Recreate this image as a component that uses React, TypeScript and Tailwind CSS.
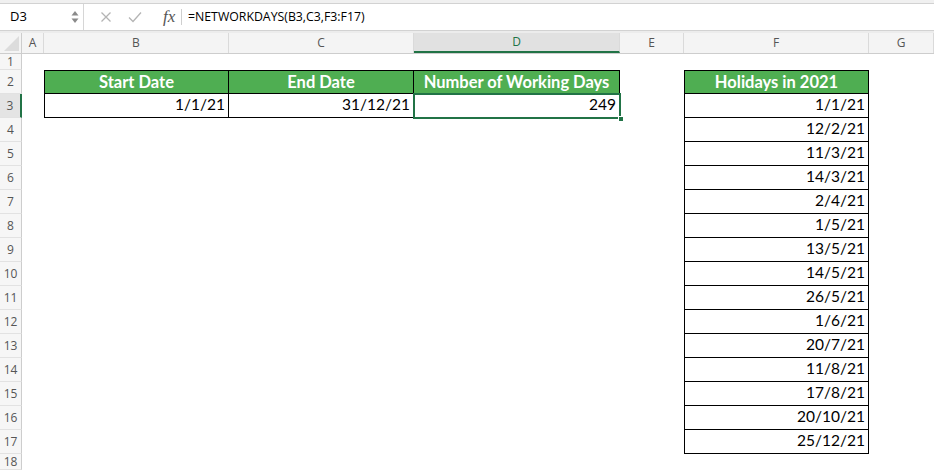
import React from 'react';

const cols = [
  { key: 'A', w: 'w-[22px]' },
  { key: 'B', w: 'w-[185px]' },
  { key: 'C', w: 'w-[185px]' },
  { key: 'D', w: 'w-[206px]' },
  { key: 'E', w: 'w-[64px]' },
  { key: 'F', w: 'w-[185px]' },
  { key: 'G', w: 'flex-1' },
];

const holidays = [
  '1/1/21',
  '12/2/21',
  '11/3/21',
  '14/3/21',
  '2/4/21',
  '1/5/21',
  '13/5/21',
  '14/5/21',
  '26/5/21',
  '1/6/21',
  '20/7/21',
  '11/8/21',
  '17/8/21',
  '20/10/21',
  '25/12/21',
];

const cellFont = { fontFamily: 'Lato, "Open Sans", sans-serif' };
const uiFont = { fontFamily: '"Open Sans", "Noto Sans", sans-serif' };

function HeaderCell({ children, left }: { children: React.ReactNode; left?: boolean }) {
  return (
    <div
      className={`h-full flex items-center justify-center bg-[#4fae52] text-white font-bold text-[16.5px] border-t border-r border-b border-black ${left ? 'border-l' : ''}`}
    >
      {children}
    </div>
  );
}

function DataCell({ children, left }: { children: React.ReactNode; left?: boolean }) {
  return (
    <div
      className={`h-full flex items-end justify-end pr-[3px] pb-[1px] text-black text-[15.5px] border-r border-b border-black ${left ? 'border-l' : ''}`}
    >
      {children}
    </div>
  );
}

function cellContent(row: number, col: string) {
  if (row === 2) {
    if (col === 'B') return <HeaderCell left>Start Date</HeaderCell>;
    if (col === 'C') return <HeaderCell>End Date</HeaderCell>;
    if (col === 'D') return <HeaderCell>Number of Working Days</HeaderCell>;
    if (col === 'F') return <HeaderCell left>Holidays in 2021</HeaderCell>;
  }
  if (row === 3) {
    if (col === 'B') return <DataCell left>1/1/21</DataCell>;
    if (col === 'C') return <DataCell>31/12/21</DataCell>;
    if (col === 'D')
      return (
        <div className="relative h-full">
          <DataCell>249</DataCell>
          <div className="absolute -top-px -left-px -right-px -bottom-px border-2 border-[#217346]" />
          <div className="absolute -right-[4px] -bottom-[4px] w-[6px] h-[6px] bg-[#217346] border border-white" />
        </div>
      );
  }
  if (col === 'F' && row >= 3 && row <= 17) {
    return <DataCell left>{holidays[row - 3]}</DataCell>;
  }
  return null;
}

export default function App() {
  const rows = Array.from({ length: 18 }, (_, i) => i + 1);

  return (
    <div className="w-[934px] h-[470px] overflow-hidden bg-white" style={cellFont}>
      {/* formula bar */}
      <div className="h-[33px] flex flex-col">
        <div className="h-[3px] bg-[#f0f0f0]" />
        <div className="h-[28px] flex items-center bg-white border-y border-[#d2d2d2] text-[13px] text-black" style={uiFont}>
          <div className="w-[84px] h-full flex items-center justify-between pl-[10px] pr-[4px] border-r border-[#d6d6d6]">
            <span>D3</span>
            <svg width="8" height="14" viewBox="0 0 8 14">
              <path d="M4 1 L7.5 5.5 L0.5 5.5 Z" fill="#8a8a8a" />
              <path d="M4 13 L7.5 8.5 L0.5 8.5 Z" fill="#8a8a8a" />
            </svg>
          </div>
          <div className="w-[97px] h-full flex items-center pl-[16px]">
            <svg width="12" height="12" viewBox="0 0 12 12" className="mr-[16px]">
              <path d="M1.5 1.5 L10.5 10.5 M10.5 1.5 L1.5 10.5" stroke="#b4b4b4" strokeWidth="1.3" />
            </svg>
            <svg width="14" height="12" viewBox="0 0 14 12" className="mr-[21px]">
              <path d="M1 6.5 L5 10.5 L13 1.5" stroke="#b4b4b4" strokeWidth="1.3" fill="none" />
            </svg>
            <span
              className="italic text-[17px] text-[#555]"
              style={{ fontFamily: '"Liberation Serif", "DejaVu Serif", serif' }}
            >
              fx
            </span>
          </div>
          <div className="w-px h-[16px] bg-[#cfcfcf]" />
          <div className="pl-[6px] text-[12.3px]">=NETWORKDAYS(B3,C3,F3:F17)</div>
        </div>
        <div className="h-[2px] bg-[#ececec]" />
      </div>

      {/* column headers */}
      <div className="h-[21px] flex bg-[#f4f4f4] border-b border-[#cdcdcd] text-[12px] text-[#555]" style={uiFont}>
        <div className="w-[22px] h-full border-r border-[#cdcdcd] flex items-end justify-end pr-[2px] pb-[2px]">
          <svg width="15" height="15" viewBox="0 0 15 15">
            <path d="M15 0 L15 15 L0 15 Z" fill="#dcdcdc" />
          </svg>
        </div>
        {cols.map((c) => (
          <div
            key={c.key}
            className={`${c.w} h-full flex items-center justify-center border-r border-[#dadada] ${
              c.key === 'D' ? 'bg-[#e1e1e1] text-[#217346] border-b-2 border-b-[#217346]' : ''
            }`}
          >
            {c.key}
          </div>
        ))}
      </div>

      {/* rows */}
      {rows.map((r) => (
        <div key={r} className={`flex ${r === 1 || r === 18 ? 'h-[16px]' : 'h-[24px]'}`}>
          <div
            className={`w-[22px] h-full flex items-center justify-center border-b border-[#e2e2e2] text-[12px] text-[#555] ${
              r === 3 ? 'bg-[#e4e4e4] border-r-2 border-r-[#217346]' : 'bg-[#f6f6f6] border-r border-r-[#cdcdcd]'
            }`}
            style={uiFont}
          >
            {r}
          </div>
          {cols.map((c) => (
            <div key={c.key} className={`${c.w} h-full`}>
              {cellContent(r, c.key)}
            </div>
          ))}
        </div>
      ))}
    </div>
  );
}
